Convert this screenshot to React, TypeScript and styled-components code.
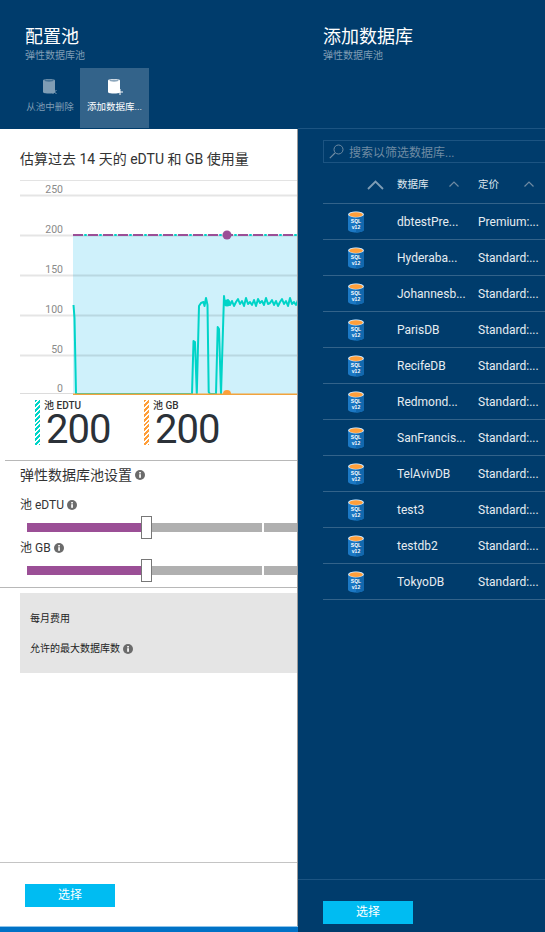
import React from 'react'
import styled, { createGlobalStyle } from 'styled-components'

const GlobalStyle = createGlobalStyle`
  html, body {
    margin: 0;
    padding: 0;
    background: #003c6c;
  }

  body {
    font-family: Roboto, 'Noto Sans CJK SC', sans-serif;
    overflow: hidden;
  }
`

const Page = styled.div`
  display: grid;
  grid-template-columns: 298px 247px;
  width: 545px;
  height: 932px;
  overflow: hidden;
`

const LeftBlade = styled.section`
  display: flex;
  flex-direction: column;
  height: 932px;
  background: #fff;
  border-right: 1px solid #9a9a9a;
  box-sizing: border-box;
`

const RightBlade = styled.section`
  display: flex;
  flex-direction: column;
  height: 932px;
  background: #003c6c;
`

const Header = styled.header`
  height: 129px;
  box-sizing: border-box;
  flex: none;
  margin-right: -1px;
  background: #003c6c;
  color: #fff;
  padding: 25px 0 0 25px;
`

const RightHeader = styled(Header)`
  margin-right: 0;
  border-bottom: 1px solid #1c5482;
`

const Title = styled.h1`
  margin: 0;
  font-size: 18px;
  line-height: 24px;
  font-weight: 400;
`

const Subtitle = styled.div`
  font-size: 10px;
  line-height: 14px;
  color: #7f9db5;
`

const Toolbar = styled.div`
  display: flex;
  margin: 5px 0 0 -25px;
`

const Command = styled.div<{ $active?: boolean }>`
  width: ${(props) => (props.$active ? '69px' : '80px')};
  height: 60px;
  box-sizing: border-box;
  display: flex;
  flex-direction: column;
  align-items: center;
  padding: 10px 0 0 ${(props) => (props.$active ? '0' : '20px')};
  font-size: 9.5px;
  line-height: 14px;
  white-space: nowrap;
  color: ${(props) => (props.$active ? '#fff' : '#7f9db5')};
  background: ${(props) => (props.$active ? '#33638a' : 'transparent')};

  & > svg {
    margin-bottom: 4px;
  }
`

const ChartTitle = styled.h2`
  margin: 0;
  padding: 20px 0 0 20px;
  height: 51px;
  box-sizing: border-box;
  font-size: 14px;
  line-height: 20px;
  font-weight: 400;
  color: #333;
`

const ChartSvg = styled.svg`
  display: block;
  flex: none;
`

const Legend = styled.div`
  display: flex;
  height: 66px;
  box-sizing: border-box;
  border-bottom: 1px solid #b8b8b8;
  margin-left: 5px;
  padding: 5px 0 0 30px;
`

const Metric = styled.div`
  display: flex;
  width: 109px;
  height: 45px;
`

const Swatch = styled.div<{ $color: string }>`
  width: 5px;
  height: 45px;
  margin-right: 4px;
  background: repeating-linear-gradient(
    135deg,
    ${(props) => props.$color} 0,
    ${(props) => props.$color} 2px,
    #fff 2px,
    #fff 3.4px
  );
`

const MetricLabel = styled.div`
  font-size: 10px;
  line-height: 11px;
  font-weight: 500;
  color: #333;
`

const MetricValue = styled.div`
  font-size: 40px;
  line-height: 34px;
  margin: 2px 0 0 2px;
  letter-spacing: -1px;
  color: #2b3138;
`

const Settings = styled.div`
  padding: 4px 0 0 20px;
  height: 127px;
  box-sizing: border-box;
  border-bottom: 1px solid #b8b8b8;
`

const SettingsTitle = styled.h3`
  display: flex;
  align-items: center;
  gap: 3px;
  margin: 0;
  font-size: 14px;
  line-height: 20px;
  font-weight: 400;
  color: #333;
`

const FieldLabel = styled.div<{ $top: number }>`
  display: flex;
  align-items: center;
  gap: 3px;
  margin-top: ${(props) => props.$top}px;
  font-size: 12px;
  line-height: 16px;
  color: #333;
`

const SliderTrack = styled.div`
  position: relative;
  display: flex;
  margin: 10px 0 0 7px;
  height: 9px;
  background: #b0b0b0;
`

const SliderFill = styled.div`
  width: 115px;
  background: #9b4f96;
`

const SliderNotch = styled.div`
  position: absolute;
  left: 235px;
  top: 0;
  width: 2px;
  height: 9px;
  background: #fff;
`

const SliderThumb = styled.div`
  position: absolute;
  left: 114px;
  top: -7px;
  width: 11px;
  height: 23px;
  box-sizing: border-box;
  background: #fff;
  border: 1px solid #777;
`

const SummaryBox = styled.div`
  margin: 5px 0 0 20px;
  height: 80px;
  box-sizing: border-box;
  padding: 19px 0 0 10px;
  background: #e5e5e5;
  font-size: 10px;
  line-height: 14px;
  color: #222;
`

const SummaryRow = styled.div`
  display: flex;
  align-items: center;
  gap: 3px;
  margin-bottom: 16px;
`

const LeftFooter = styled.footer`
  margin-top: auto;
  height: 64px;
  box-sizing: border-box;
  padding: 21px 0 0 25px;
  border-top: 1px solid #c4c4c4;
  flex: none;
`

const StatusStrip = styled.div`
  height: 6px;
  flex: none;
  margin-right: -1px;
  background: #0072c6;
  border-top: 1px solid #8ec4ea;
  box-sizing: border-box;
`

const SelectButton = styled.button`
  display: block;
  width: 90px;
  height: 23px;
  padding: 0;
  border: 0;
  background: #00bcf2;
  color: #fff;
  font-family: inherit;
  font-size: 12px;
  line-height: 23px;
`

const SearchBox = styled.div`
  display: flex;
  align-items: center;
  gap: 5px;
  height: 23px;
  box-sizing: border-box;
  margin: 11px 0 0 25px;
  padding-left: 5px;
  border: 1px solid #1c5482;
  border-right: 0;
  color: #6f8ba3;
  font-size: 12px;
  white-space: nowrap;
`

const TableHead = styled.div`
  display: grid;
  grid-template-columns: 74px 81px 92px;
  height: 41px;
  box-sizing: border-box;
  margin-left: 25px;
  padding-top: 15px;
  border-bottom: 1px solid #33638a;
  color: #dfe7ee;
  font-size: 10.5px;
  line-height: 14px;
`

const HeadCell = styled.div`
  position: relative;
  white-space: nowrap;
`

const HeadChevron = styled.svg<{ $left: number }>`
  position: absolute;
  top: 3px;
  left: ${(props) => props.$left}px;
`

const BigChevron = styled.svg`
  position: absolute;
  top: 2px;
  left: 44px;
`

const TableRow = styled.div`
  display: grid;
  grid-template-columns: 74px 81px 92px;
  align-items: center;
  height: 36px;
  box-sizing: border-box;
  margin-left: 25px;
  border-bottom: 1px solid #33638a;
  color: #e6ecf1;
  font-size: 12px;
  white-space: nowrap;
`

const RowIcon = styled.svg`
  display: block;
  margin-left: 25px;
`

const RightFooter = styled.footer`
  margin-top: auto;
  height: 53px;
  box-sizing: border-box;
  padding: 21px 0 0 25px;
  border-top: 1px solid #1c5482;
  flex: none;
`

const databases = [
  ['dbtestPre...', 'Premium:...'],
  ['Hyderaba...', 'Standard:...'],
  ['Johannesb...', 'Standard:...'],
  ['ParisDB', 'Standard:...'],
  ['RecifeDB', 'Standard:...'],
  ['Redmond...', 'Standard:...'],
  ['SanFrancis...', 'Standard:...'],
  ['TelAvivDB', 'Standard:...'],
  ['test3', 'Standard:...'],
  ['testdb2', 'Standard:...'],
  ['TokyoDB', 'Standard:...'],
]

const jitter = [303, 300, 305, 301, 306, 302, 299, 304, 301, 306, 298, 304, 302, 305, 300, 306, 299, 303, 301, 305, 298, 304]

const usagePoints = () => {
  const start =
    '73.5,305 74.5,318 76,394 192,394 193.5,341 195,342 196.8,394 199,306 201,303 203.5,302 204.5,306 206,298 207.5,305 208.7,392 210,394 216,394 217.7,327 219,329 221,394 224,296 225,304'
  let line = start
  for (let x = 226; x <= 298; x += 2) {
    line += ` ${x},${jitter[((x - 226) / 2) % jitter.length]}`
  }
  return line
}

const InfoIcon = ({ size = 10 }: { size?: number }) => (
  <svg width={size} height={size} viewBox="0 0 10 10">
    <circle cx="5" cy="5" r="5" fill="#6b6b6b" />
    <rect x="4.2" y="4.2" width="1.7" height="3.6" fill="#fff" />
    <rect x="4.2" y="2" width="1.7" height="1.5" fill="#fff" />
  </svg>
)

const SmallChevron = ({ left }: { left: number }) => (
  <HeadChevron $left={left} width="10" height="6" viewBox="0 0 10 6">
    <path d="M0.5 5.5 L5 1 L9.5 5.5" fill="none" stroke="#6f8ba3" strokeWidth="1.2" />
  </HeadChevron>
)

const CommandIcon = ({ color, badge }: { color: string; badge: 'x' | 'plus' }) => (
  <svg width="18" height="18" viewBox="0 0 18 18">
    <path d="M2 2.5 C2 0.5 14 0.5 14 2.5 V14 C14 16 2 16 2 14 Z" fill={color} />
    <ellipse cx="8" cy="2.6" rx="4.5" ry="1.1" fill="#003c6c" opacity="0.45" />
    {badge === 'x' ? (
      <path d="M11.5 12 L15.5 16 M15.5 12 L11.5 16" stroke={color} strokeWidth="1" />
    ) : (
      <path d="M14 11 V17 M11 14 H17" stroke={color} strokeWidth="1" />
    )}
  </svg>
)

const SqlIcon = () => (
  <RowIcon width="16" height="22" viewBox="0 0 16 22">
    <path d="M0 3.5 C0 -0.5 16 -0.5 16 3.5 V18.5 C16 22.5 0 22.5 0 18.5 Z" fill="#1b78c4" />
    <path d="M8 3 V21.5 C12 21.5 16 20.5 16 18.5 V3.5 Z" fill="#1268ae" />
    <ellipse cx="8" cy="3.4" rx="7.8" ry="3" fill="#d8e8f4" />
    <ellipse cx="8" cy="3.6" rx="6.8" ry="2.4" fill="#ff9f3a" />
    <text x="8" y="12" fontSize="5" fontWeight="700" fontFamily="'Liberation Sans', sans-serif" fill="#fff" textAnchor="middle">
      SQL
    </text>
    <text x="8" y="18" fontSize="5" fontWeight="700" fontFamily="'Liberation Sans', sans-serif" fill="#fff" textAnchor="middle">
      v12
    </text>
  </RowIcon>
)

const UsageChart = () => {
  const grid = [
    { y: 15, label: '250', labelY: 13 },
    { y: 55, label: '200', labelY: 53 },
    { y: 95, label: '150', labelY: 93 },
    { y: 135, label: '100', labelY: 133 },
    { y: 175, label: '50', labelY: 173 },
  ]
  return (
    <ChartSvg width="297" height="215" viewBox="0 180 297 215">
      <g transform="translate(0 180)">
        <rect x="20" y="0" width="277" height="1" fill="#e3e3e3" />
        <rect x="73" y="55" width="224" height="159" fill="#cff1fb" />
        {grid.map((row) => (
          <g key={row.label}>
            <rect x="20" y={row.y - 0.5} width="277" height="2" fill="#000" opacity="0.1" />
            <text x="63" y={row.labelY} fontSize="10.5" fill="#8a8a8a" textAnchor="end" fontFamily="Roboto, sans-serif">
              {row.label}
            </text>
          </g>
        ))}
        <text x="63" y="212" fontSize="10.5" fill="#8a8a8a" textAnchor="end" fontFamily="Roboto, sans-serif">
          0
        </text>
        <rect x="20" y="213" width="53" height="1" fill="#dcdcdc" />
        <g transform="translate(0 -180)">
          <polyline points={usagePoints()} fill="none" stroke="#00d4c8" strokeWidth="2" strokeLinejoin="round" />
          <circle cx="227" cy="303" r="3.6" fill="#00d4c8" />
        </g>
        <line x1="73" y1="55" x2="297" y2="55" stroke="#00d4c8" strokeWidth="2" strokeDasharray="2.5 12.5" strokeDashoffset="-11.25" />
        <line x1="73" y1="55" x2="297" y2="55" stroke="#9b4f96" strokeWidth="2" strokeDasharray="10 5" />
        <circle cx="227" cy="55" r="4.5" fill="#9b4f96" />
        <circle cx="227" cy="214" r="4" fill="#ff9f3a" />
        <rect x="73" y="213.5" width="224" height="1.5" fill="#f2a33c" />
      </g>
    </ChartSvg>
  )
}

const Slider = () => (
  <SliderTrack>
    <SliderFill />
    <SliderNotch />
    <SliderThumb />
  </SliderTrack>
)

const App: React.FC = () => (
  <Page>
    <GlobalStyle />
    <LeftBlade>
      <Header>
        <Title>配置池</Title>
        <Subtitle>弹性数据库池</Subtitle>
        <Toolbar>
          <Command>
            <CommandIcon color="#7f9db5" badge="x" />
            从池中删除
          </Command>
          <Command $active>
            <CommandIcon color="#fff" badge="plus" />
            添加数据库...
          </Command>
        </Toolbar>
      </Header>
      <ChartTitle>估算过去 14 天的 eDTU 和 GB 使用量</ChartTitle>
      <UsageChart />
      <Legend>
        <Metric>
          <Swatch $color="#00d4c8" />
          <div>
            <MetricLabel>池 EDTU</MetricLabel>
            <MetricValue>200</MetricValue>
          </div>
        </Metric>
        <Metric>
          <Swatch $color="#ff9f3a" />
          <div>
            <MetricLabel>池 GB</MetricLabel>
            <MetricValue>200</MetricValue>
          </div>
        </Metric>
      </Legend>
      <Settings>
        <SettingsTitle>
          弹性数据库池设置 <InfoIcon />
        </SettingsTitle>
        <FieldLabel $top={12}>
          池 eDTU <InfoIcon />
        </FieldLabel>
        <Slider />
        <FieldLabel $top={8}>
          池 GB <InfoIcon />
        </FieldLabel>
        <Slider />
      </Settings>
      <SummaryBox>
        <SummaryRow>每月费用</SummaryRow>
        <SummaryRow>
          允许的最大数据库数 <InfoIcon />
        </SummaryRow>
      </SummaryBox>
      <LeftFooter>
        <SelectButton>选择</SelectButton>
      </LeftFooter>
      <StatusStrip />
    </LeftBlade>
    <RightBlade>
      <RightHeader>
        <Title>添加数据库</Title>
        <Subtitle>弹性数据库池</Subtitle>
      </RightHeader>
      <SearchBox>
        <svg width="15" height="15" viewBox="0 0 15 15">
          <circle cx="9.5" cy="5.5" r="4.5" fill="none" stroke="#6f8ba3" strokeWidth="1" />
          <path d="M6 9 L0.8 14.2" stroke="#6f8ba3" strokeWidth="1.2" />
        </svg>
        搜索以筛选数据库...
      </SearchBox>
      <TableHead>
        <HeadCell>
          <BigChevron width="17" height="10" viewBox="0 0 17 10">
            <path d="M1 9 L8.5 1.5 L16 9" fill="none" stroke="#7f9db5" strokeWidth="1.8" />
          </BigChevron>
        </HeadCell>
        <HeadCell>
          数据库
          <SmallChevron left={52} />
        </HeadCell>
        <HeadCell>
          定价
          <SmallChevron left={46} />
        </HeadCell>
      </TableHead>
      {databases.map(([name, tier]) => (
        <TableRow key={name}>
          <SqlIcon />
          <span>{name}</span>
          <span>{tier}</span>
        </TableRow>
      ))}
      <RightFooter>
        <SelectButton>选择</SelectButton>
      </RightFooter>
    </RightBlade>
  </Page>
)

export default App
